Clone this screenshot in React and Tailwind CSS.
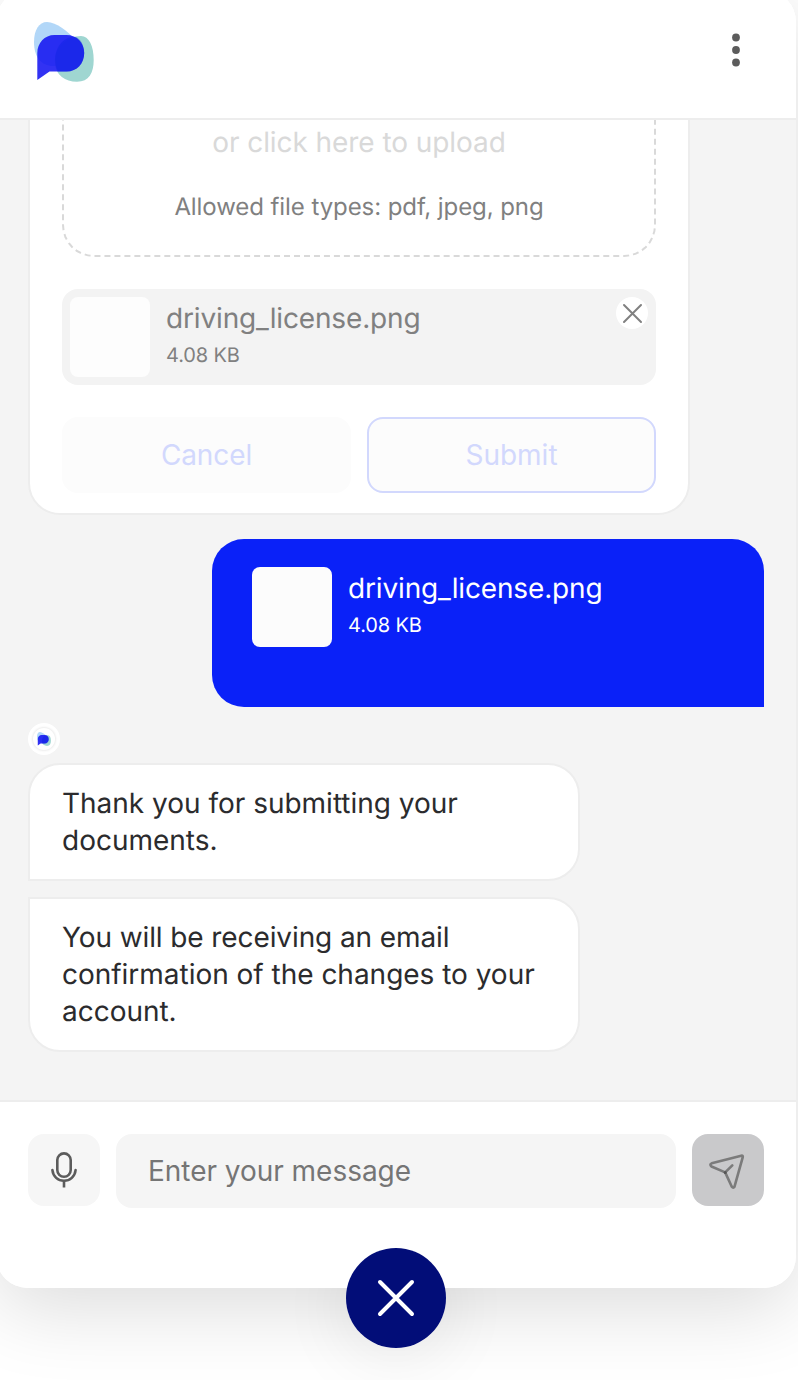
import React from "react";

function Logo({ className }) {
  return (
    <svg viewBox="0 0 60 60" className={className} fill="none">
      <path
        d="M0 20C0 8 5 0 13 0C22 0 35 10 41 18C44 22 42 31 37 37C32 42 25 44 19 44C7 44 0 35 0 20Z"
        fill="#B2D7F8"
      />
      <path
        d="M47 14C55 14 59.700 24 59.700 38C59.700 51 55 59.700 43 59.700C31 59.700 22 53 21 42C19 26 33 14 47 14Z"
        fill="#9FD6D1"
      />
      <path
        d="M20.500 13H32.500C43 13 50.200 21 50.200 31C50.200 41.500 43 49.500 32.500 49.500H15.500L3.300 58V31C3.300 21 10.500 13 20.500 13Z"
        fill="#1313F1"
        fillOpacity="0.87"
      />
      <path
        d="M28 20C33 15.500 39 13.800 43 15.500C48 19 50.200 25 50.200 31C50.200 41.500 43 49.500 32.500 49.500H24C19.500 41 20 28 28 20Z"
        fill="#0D20E5"
        fillOpacity="0.4"
      />
    </svg>
  );
}

function FileInfo({ tone }) {
  return (
    <div className={tone === "light" ? "text-white" : "text-[#808080]"}>
      <p className="h-[43px] text-[28px] leading-[43px] tracking-[-0.15px]">driving_license.png</p>
      <p className="text-[20px] leading-[30px] tracking-[-0.12px]">4.08 KB</p>
    </div>
  );
}

function Header() {
  return (
    <header className="flex h-[130px] shrink-0 items-start justify-between border-b-2 border-[#ededed] bg-white pr-[52px] pl-[38px]">
      <Logo className="mt-8 h-[60px] w-[60px]" />
      <svg viewBox="0 0 16 40" className="mt-10 h-10 w-4" fill="#5c5c5c" role="button" aria-label="Menu">
        <circle cx="8" cy="7.500" r="3.900" />
        <circle cx="8" cy="20" r="3.900" />
        <circle cx="8" cy="32.500" r="3.900" />
      </svg>
    </header>
  );
}

function UploadCard() {
  return (
    <section className="flex w-[662px] shrink-0 flex-col gap-8 rounded-[32px] border-2 border-[#ededed] bg-white px-8 pt-8 pb-5">
      <div className="flex h-[280px] flex-col items-center justify-end rounded-[32px] border-2 border-dashed border-[#d9d9d9] pb-8">
        <p className="text-[28px] leading-[42px] tracking-[-0.07px] text-[#d9d9d9]">or click here to upload</p>
        <p className="mt-[28px] text-[24px] leading-[32px] tracking-[-0.08px] text-[#808080]">
          Allowed file types: pdf, jpeg, png
        </p>
      </div>
      <div className="flex h-24 gap-4 rounded-2xl bg-[#f3f3f3] p-2">
        <div className="h-20 w-20 rounded-lg bg-[#fdfdfd]" />
        <FileInfo tone="dark" />
        <button
          aria-label="Remove file"
          className="ml-auto flex h-8 w-8 items-center justify-center rounded-full bg-white"
        >
          <svg viewBox="0 0 32 32" className="h-8 w-8" stroke="#808080" strokeWidth="2" strokeLinecap="round">
            <path d="M8 8L25 25M25 8L8 25" />
          </svg>
        </button>
      </div>
      <div className="grid grid-cols-2 gap-4 text-[28px] text-[#d2d8fd]">
        <button className="h-[76px] rounded-2xl bg-[#fcfcfc] tracking-[-0.1px]">Cancel</button>
        <button className="h-[76px] rounded-2xl border-2 border-[#d2d8fd] bg-[#fcfcfc]">Submit</button>
      </div>
    </section>
  );
}

function Messages() {
  return (
    <main className="flex min-h-0 flex-1 flex-col justify-end overflow-hidden bg-[#f4f4f4] pr-8 pb-12 pl-8">
      <UploadCard />
      <div className="mt-6 flex h-[168px] w-[552px] shrink-0 gap-4 self-end rounded-[32px] rounded-br-none bg-[#0a21f8] px-10 pt-7">
        <div className="h-20 w-20 rounded-lg bg-[#fcfcfc]" />
        <FileInfo tone="light" />
      </div>
      <div className="mt-4 flex h-8 w-8 shrink-0 items-center justify-center rounded-full bg-white">
        <div className="flex h-[22px] w-[22px] items-center justify-center rounded-full shadow-[0_0_2px_1px_rgba(0,0,0,0.08)]">
          <Logo className="h-[14px] w-[14px]" />
        </div>
      </div>
      <p className="mt-2 w-[552px] shrink-0 rounded-[32px] rounded-bl-none border-2 border-[#ededed] bg-white px-8 py-5 text-[28px] leading-[37px] tracking-[-0.01px] text-[#2b2b2d]">
        Thank you for submitting your documents.
      </p>
      <p className="mt-4 w-[552px] shrink-0 rounded-[32px] rounded-tl-none border-2 border-[#ededed] bg-white px-8 py-5 text-[28px] leading-[37px] tracking-[-0.02px] text-[#2b2b2d]">
        <span className="tracking-[-0.1px]">You will be receiving an email</span> confirmation of the changes to your account.
      </p>
    </main>
  );
}

function Composer() {
  return (
    <footer className="flex h-[188px] shrink-0 items-start gap-4 border-t-2 border-[#ededed] bg-white px-8 pt-8">
      <button aria-label="Record" className="flex h-[72px] w-[72px] items-center justify-center rounded-2xl bg-[#f6f6f6]">
        <svg viewBox="0 0 36 40" className="h-10 w-9" fill="none" stroke="#5c5c5c" strokeWidth="2.600">
          <rect x="11.300" y="3.400" width="13.400" height="23.400" rx="6.700" />
          <path d="M6.400 20C7 26.500 12 30.800 18 30.800S29 26.500 29.600 20" strokeLinecap="round" />
          <path d="M18 31V37.500" />
        </svg>
      </button>
      <input
        type="text"
        aria-label="Message"
        placeholder="Enter your message"
        className="h-[74px] min-w-0 flex-1 rounded-2xl bg-[#f5f5f5] px-8 text-[28px] tracking-[-0.03px] outline-none placeholder:text-[#757575]"
      />
      <button aria-label="Send" className="h-[72px] w-[72px] rounded-2xl bg-[#c9c9cb]">
        <svg viewBox="0 0 72 72" className="h-[72px] w-[72px]" fill="none" stroke="#7b7b7b" strokeWidth="2.600" strokeLinejoin="round" strokeLinecap="round">
          <path d="M19.700 29.300L49.200 21.700Q51.300 21.200 50.700 23.300L42.500 52.700Q41.300 54.500 39.800 52.700L33.200 38.400L19.500 32.500Q17.200 30.500 19.700 29.300Z" />
          <path d="M33.200 38.400L40.300 31.300" />
          <circle cx="33.200" cy="38.400" r="1.500" fill="#565656" stroke="none" />
        </svg>
      </button>
    </footer>
  );
}

export default function App() {
  return (
    <div className="relative h-[1380px] w-[798px] overflow-hidden bg-white font-['Inter',sans-serif] [text-rendering:geometricPrecision]">
      <div className="absolute top-[1248px] left-[346px] h-[100px] w-[100px] rounded-full shadow-[0_8px_72px_rgba(0,0,0,0.09)]" />
      <div className="relative -mt-[10px] -ml-[4px] flex h-[1298px] w-[800px] flex-col rounded-[32px] shadow-[0_20px_80px_rgba(0,0,0,0.14)]">
        <div className="flex min-h-0 flex-1 flex-col overflow-hidden rounded-[32px]">
          <Header />
          <Messages />
          <Composer />
        </div>
      </div>
      <button
        aria-label="Close chat"
        className="absolute top-[1248px] left-[346px] flex h-[100px] w-[100px] items-center justify-center rounded-full bg-[#020d78]"
      >
        <svg viewBox="0 0 40 40" className="h-10 w-10" stroke="white" strokeWidth="4" strokeLinecap="round">
          <path d="M4 4L36 36M36 4L4 36" />
        </svg>
      </button>
    </div>
  );
}
